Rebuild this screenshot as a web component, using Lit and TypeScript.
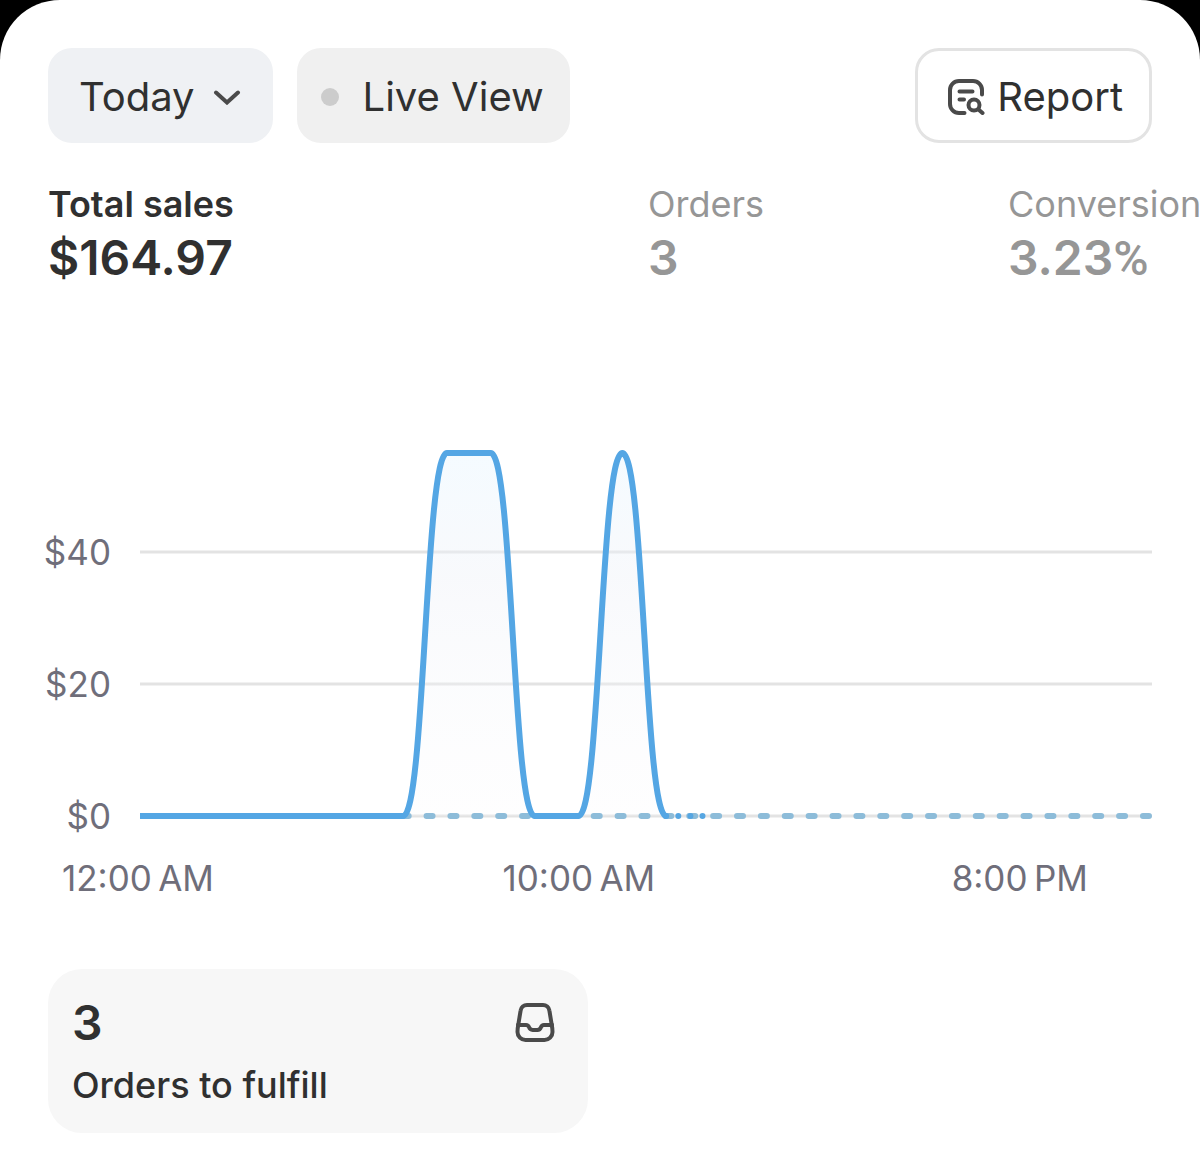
import { LitElement, html, svg, css } from "lit";
import { customElement, property, state } from "lit/decorators.js";

interface Metric {
  id: string;
  label: string;
  value: string;
  unit?: string;
}

const METRICS: Metric[] = [
  { id: "sales", label: "Total sales", value: "$164.97" },
  { id: "orders", label: "Orders", value: "3" },
  { id: "conversion", label: "Conversion", value: "3.23", unit: "%" },
];

/* Sales in dollars for each hour that has passed today. */
const HOURLY_SALES = [0, 0, 0, 0, 0, 0, 0, 54.99, 54.99, 0, 0, 54.99, 0];

const Y_TICKS = [40, 20, 0];
const X_TICKS = ["12:00\u202fAM", "10:00\u202fAM", "8:00\u202fPM"];

const PLOT_WIDTH = 1012;
const PLOT_HEIGHT = 396;
const BASELINE = 374;
const HOUR_STEP = 43.85;
const DOLLAR_STEP = 6.6;

@customElement("sales-chart")
export class SalesChart extends LitElement {
  @property({ attribute: false }) values: number[] = [];

  static styles = css`
    :host {
      display: block;
      color: #6f6e7a;
      font-size: 35px;
      line-height: 44px;
    }
    .chart {
      display: grid;
      grid-template-columns: 63px minmax(0, 1fr);
      column-gap: 29px;
      row-gap: 18px;
    }
    .y-axis {
      display: flex;
      flex-direction: column;
      justify-content: flex-end;
      align-items: flex-end;
      gap: 88px;
    }
    .plot {
      display: block;
      width: 100%;
      height: 396px;
    }
    .x-axis {
      grid-column: 2;
      display: grid;
      grid-template-columns: 10fr 10fr 3fr;
      margin-left: -2px;
    }
    .x-tick {
      display: flex;
      justify-content: center;
      width: 0;
      white-space: nowrap;
    }
    .gridline {
      stroke: #e3e3e3;
      stroke-width: 3;
    }
    .previous {
      stroke: #8dbcd9;
      stroke-width: 6;
      stroke-linecap: round;
      stroke-dasharray: 6 17.88;
    }
    .upcoming {
      stroke: #56a6e2;
      stroke-width: 6;
      stroke-linecap: round;
      stroke-dasharray: 0 12.1;
    }
    .line {
      fill: none;
      stroke: #54a6e4;
      stroke-width: 6;
      stroke-linejoin: round;
    }
    .area {
      fill: url(#fade);
    }
  `;

  private x(hour: number) {
    return hour * HOUR_STEP;
  }

  private y(amount: number) {
    return BASELINE - amount * DOLLAR_STEP;
  }

  private linePath() {
    return this.values
      .map((amount, hour) => {
        const px = this.x(hour);
        const py = this.y(amount);
        if (hour === 0) return `M${px} ${py}`;
        const previous = this.values[hour - 1];
        if (previous === amount) return `L${px} ${py}`;
        const middle = px - HOUR_STEP / 2;
        return `C${middle} ${this.y(previous)} ${middle} ${py} ${px} ${py}`;
      })
      .join(" ");
  }

  render() {
    const line = this.linePath();
    const now = this.x(this.values.length - 1);
    return html`
      <div class="chart">
        <div class="y-axis">
          ${Y_TICKS.map((tick) => html`<span>$${tick}</span>`)}
        </div>
        <svg
          class="plot"
          viewBox="0 0 ${PLOT_WIDTH} ${PLOT_HEIGHT}"
          preserveAspectRatio="none"
          role="img"
          aria-label="Total sales by hour"
        >
          <defs>
            <linearGradient id="fade" x1="0" y1="0" x2="0" y2="1">
              <stop offset="0" stop-color="#e8f6ff" stop-opacity="0.45" />
              <stop offset="0.35" stop-color="#eef1f8" stop-opacity="0.4" />
              <stop offset="1" stop-color="#fafafc" stop-opacity="0.2" />
            </linearGradient>
          </defs>
          ${Y_TICKS.map(
            (tick) => svg`<line class="gridline" x1="0" x2=${PLOT_WIDTH} y1=${this.y(tick)} y2=${this.y(tick)} />`,
          )}
          <path class="area" d="${line} Z" />
          <line class="previous" x1="0" x2=${PLOT_WIDTH} y1=${BASELINE} y2=${BASELINE} />
          <line class="upcoming" x1=${now} x2=${now + 40} y1=${BASELINE} y2=${BASELINE} />
          <path class="line" d=${line} />
        </svg>
        <div class="x-axis">
          ${X_TICKS.map((tick) => html`<span class="x-tick">${tick}</span>`)}
        </div>
      </div>
    `;
  }
}

@customElement("app-root")
export class AppRoot extends LitElement {
  @state() private selected = "sales";

  static styles = css`
    :host {
      display: block;
      min-height: 100vh;
      background: #000;
      color: #303030;
      font-family: Inter, "Liberation Sans", sans-serif;
    }
    button {
      margin: 0;
      padding: 0;
      border: 0;
      background: none;
      color: inherit;
      font: inherit;
      text-align: left;
      cursor: pointer;
    }
    .screen {
      box-sizing: border-box;
      min-height: 100vh;
      padding: 48px 48px 34px;
      border-radius: 60px 60px 0 0;
      background: #fff;
      overflow: hidden;
    }
    .toolbar {
      display: flex;
      gap: 24px;
      margin-bottom: 38px;
    }
    .toolbar .pill {
      box-sizing: border-box;
      display: flex;
      align-items: center;
      padding: 23px 26px 21px 24px;
      border-radius: 24px;
      background: #f0f0f0;
      font-size: 40px;
      line-height: 51px;
      white-space: nowrap;
    }
    .toolbar .period {
      gap: 18px;
      padding: 23px 32px 21px 31px;
      background: #eff1f4;
    }
    .toolbar .live {
      gap: 24px;
    }
    .toolbar .report {
      gap: 12px;
      margin-left: auto;
      padding: 20px 26px 18px 30px;
      border: 3px solid #e3e3e3;
      background: #fff;
    }
    .dot {
      width: 18px;
      height: 18px;
      border-radius: 50%;
      background: #cccccc;
    }
    .icon {
      display: block;
      fill: none;
      stroke: #4a4a4a;
      stroke-width: 4;
      stroke-linecap: round;
      stroke-linejoin: round;
    }
    .metrics {
      display: grid;
      grid-template-columns: minmax(0, 25fr) minmax(0, 15fr) minmax(0, 8fr);
      margin-right: -48px;
      margin-bottom: 152px;
    }
    .metric {
      display: flex;
      flex-direction: column;
      color: #969696;
      white-space: nowrap;
    }
    .metric-label {
      font-size: 36px;
      line-height: 46px;
    }
    .metric-value {
      font-size: 48px;
      font-weight: 600;
      line-height: 62px;
    }
    .unit {
      font-family: Roboto, sans-serif;
      font-weight: 500;
    }
    .metric.active {
      color: #303030;
    }
    .metric.active .metric-label {
      font-weight: 600;
    }
    .cards {
      display: grid;
      grid-template-columns: repeat(2, minmax(0, 1fr));
      gap: 24px;
      margin-top: 69px;
    }
    .card {
      display: flex;
      flex-direction: column;
      gap: 8px;
      padding: 24px;
      border-radius: 34px;
      background: #f7f7f7;
    }
    .card-head {
      display: flex;
      align-items: center;
      justify-content: space-between;
      width: 100%;
      padding-right: 8px;
      box-sizing: border-box;
      font-size: 48px;
      font-weight: 600;
      line-height: 60px;
    }
    .card-label {
      font-size: 36px;
      font-weight: 500;
      line-height: 48px;
    }
  `;

  render() {
    return html`
      <main class="screen">
        <div class="toolbar">
          <button class="pill period" type="button" aria-haspopup="listbox">
            Today
            <svg class="icon" width="28" height="16" viewBox="0 0 28 16" aria-hidden="true">
              <path d="M3 3.500 14 13.500 25 3.500" stroke-linejoin="miter" />
            </svg>
          </button>
          <button class="pill live" type="button"><span class="dot"></span>Live View</button>
          <button class="pill report" type="button">
            <svg class="icon" width="37" height="36" viewBox="0 0 37 36" aria-hidden="true">
              <path d="M34 15.500V11a9 9 0 0 0-9-9H11a9 9 0 0 0-9 9v14a9 9 0 0 0 9 9h5.500" />
              <path d="M11.500 12.500h13M11.500 20.500h4.500" />
              <circle cx="26" cy="26" r="5.500" />
              <path d="M30.200 30.200 34.500 34" />
            </svg>
            Report
          </button>
        </div>

        <div class="metrics">
          ${METRICS.map(
            (metric) => html`
              <button
                type="button"
                class="metric ${metric.id === this.selected ? "active" : ""}"
                aria-pressed=${metric.id === this.selected ? "true" : "false"}
                @click=${() => (this.selected = metric.id)}
              >
                <span class="metric-label">${metric.label}</span>
                <span class="metric-value"
                  >${metric.value}${metric.unit ? html`<span class="unit">${metric.unit}</span>` : ""}</span
                >
              </button>
            `,
          )}
        </div>

        <sales-chart .values=${HOURLY_SALES}></sales-chart>

        <div class="cards">
          <button class="card" type="button">
            <span class="card-head">
              3
              <svg class="icon" width="42" height="42" viewBox="0 0 42 42" aria-hidden="true">
                <path
                  d="M13 3h16a6.500 6.500 0 0 1 6.400 5.600L37.600 22c.6 3 .9 5.500.9 8a8 8 0 0 1-8 8h-19a8 8 0 0 1-8-8c0-2.500.3-5 .9-8L6.600 8.600A6.500 6.500 0 0 1 13 3Z"
                />
                <path d="M4 23h8c1.500 0 2.500.8 3 2.200.6 1.800 1.900 2.800 3.700 2.800h4.600c1.800 0 3.100-1 3.700-2.800.5-1.400 1.500-2.200 3-2.200h8" />
              </svg>
            </span>
            <span class="card-label">Orders to fulfill</span>
          </button>
        </div>
      </main>
    `;
  }
}
